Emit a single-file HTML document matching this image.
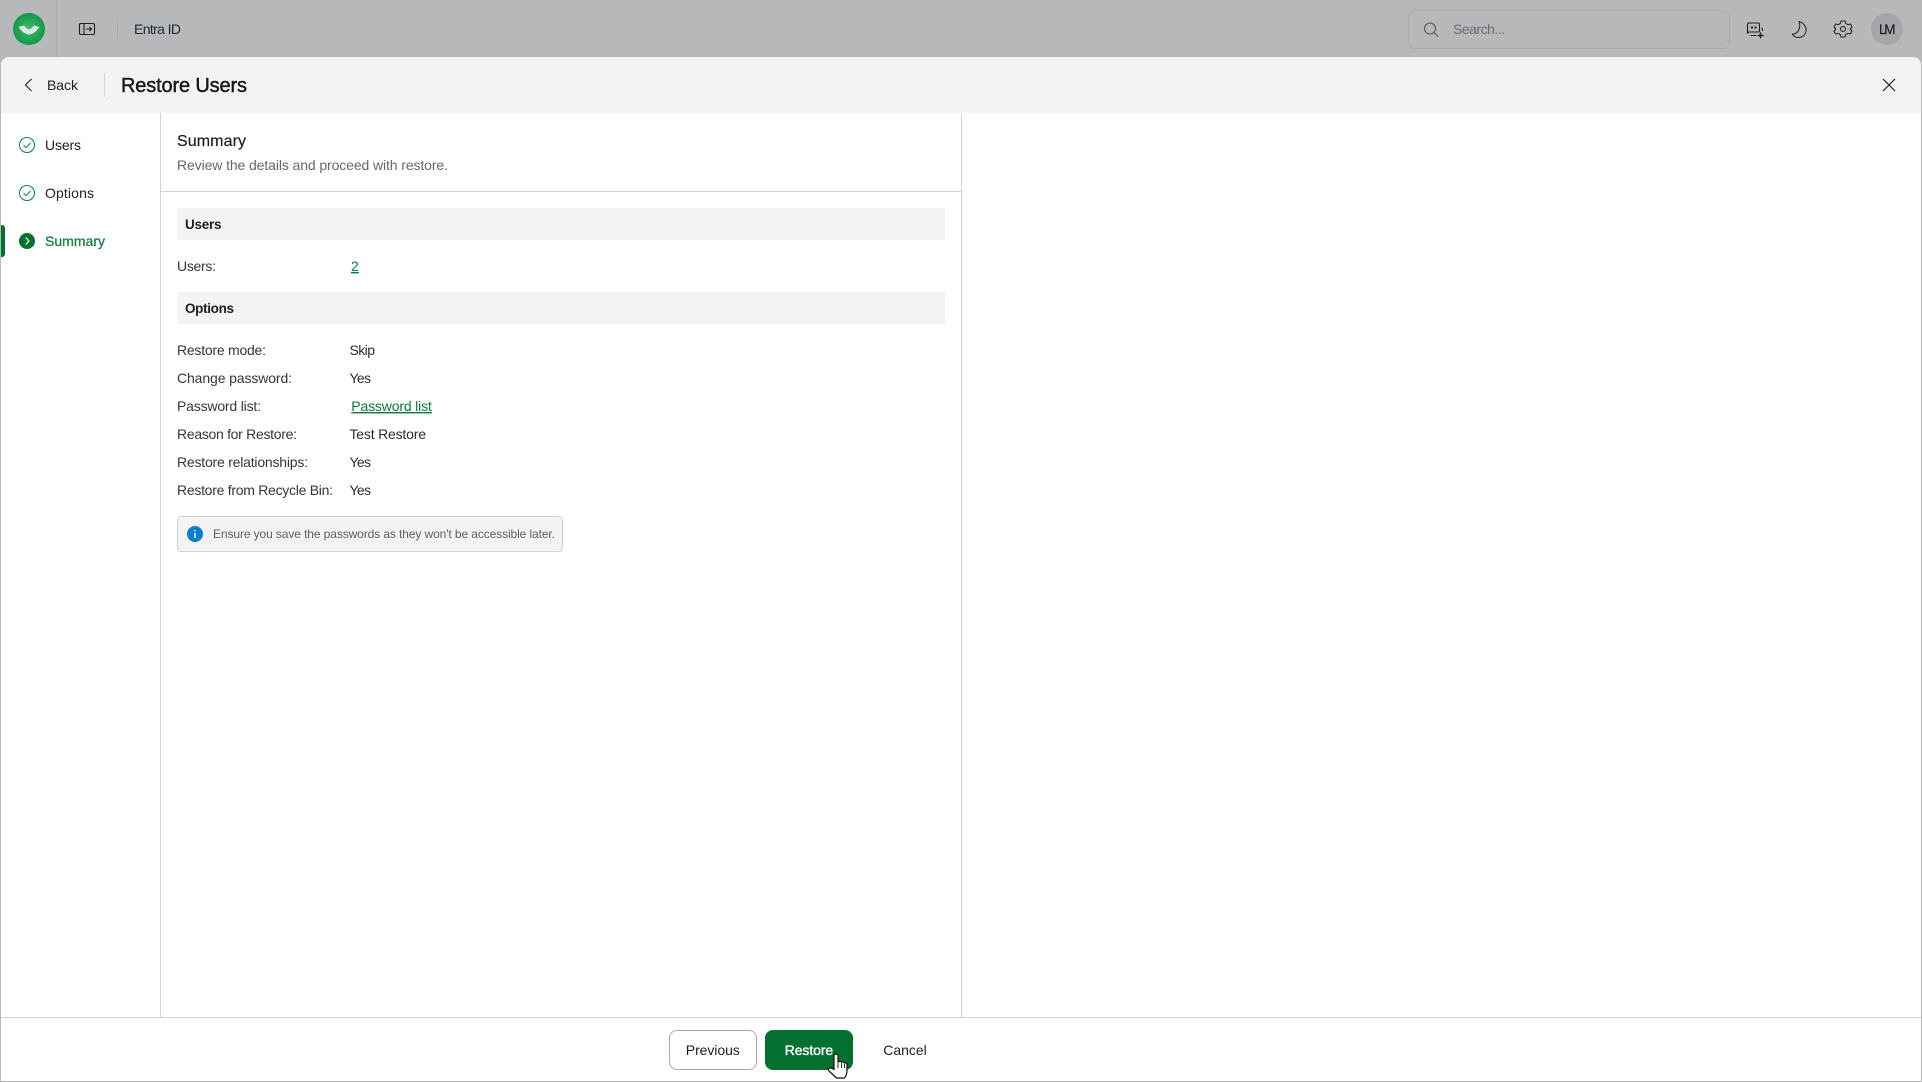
<!DOCTYPE html>
<html lang="en">
<head>
<meta charset="utf-8">
<title>Restore Users</title>
<style>
html,body{margin:0;padding:0;width:1922px;height:1082px;overflow:hidden;background:#b7b8ba}
.abs{position:absolute}
#modal{left:1px;top:57px;width:1920px;height:1024px;background:#fff;border-radius:8px 8px 0 0;overflow:hidden}
#head{left:0;top:0;width:1920px;height:56px;background:#f2f4f3}
svg{position:absolute;left:0;top:0}
text{font-family:"Liberation Sans",sans-serif;font-size:14px;fill:#1c1f22}
</style>
</head>
<body>
<div class="abs" style="left:56px;top:0;width:1px;height:57px;background:#a9aaac"></div>
<div class="abs" style="left:117px;top:19px;width:1px;height:20px;background:#a9aaac"></div>
<div class="abs" style="left:1408px;top:10px;width:320px;height:37px;border:1px solid #a9aaac;border-radius:8px"></div>
<div class="abs" style="left:1871px;top:13px;width:32px;height:32px;border-radius:50%;background:#a5a6a8"></div>
<div id="modal" class="abs">
  <div id="head" class="abs"></div>
  <div class="abs" style="left:103px;top:16px;width:1px;height:24px;background:#d2d4d4"></div>
  <div class="abs" style="left:159px;top:56px;width:1px;height:904px;background:#d2d4d4"></div>
  <div class="abs" style="left:960px;top:56px;width:1px;height:904px;background:#d2d4d4"></div>
  <div class="abs" style="left:160px;top:134px;width:800px;height:1px;background:#d2d4d4"></div>
  <div class="abs" style="left:0;top:960px;width:1920px;height:1px;background:#d2d4d4"></div>
  <div class="abs" style="left:0;top:168px;width:4px;height:32px;background:#04702f;border-radius:0 3px 3px 0"></div>
  <div class="abs" style="left:176px;top:151px;width:768px;height:32px;background:#f2f4f3"></div>
  <div class="abs" style="left:176px;top:235px;width:768px;height:32px;background:#f2f4f3"></div>
  <div class="abs" style="left:176px;top:459px;width:384px;height:34px;background:#f2f4f3;border:1px solid #d2d4d4;border-radius:4px"></div>
  <div class="abs" style="left:668px;top:973px;width:86px;height:38px;border:1px solid #a9acae;border-radius:8px;background:#fff"></div>
  <div class="abs" style="left:764px;top:973px;width:88px;height:40px;background:#04702f;border-radius:8px"></div>
</div>
<svg width="1922" height="1082" viewBox="0 0 1922 1082" xmlns="http://www.w3.org/2000/svg">
  <defs>
    <radialGradient id="g" cx="0.5" cy="0.5" r="0.6">
      <stop offset="0" stop-color="#43b56e"/><stop offset="0.6" stop-color="#1fa352"/><stop offset="1" stop-color="#0c8c42"/>
    </radialGradient>
  </defs>
  <!-- logo -->
  <circle cx="29" cy="29" r="16" fill="url(#g)"/>
  <path d="M18.500 27 L24 25.500 Q27 29 29 29.500 Q31 29 34 25.500 L39.500 27 Q35 34 29 34.500 Q23 34 18.500 27 Z" fill="#d9e8dd"/>
  <!-- sidebar toggle -->
  <g fill="none" stroke="#1c1f22" stroke-width="1.100">
    <rect x="79.500" y="23.500" width="15" height="11" rx="1.500"/>
    <path d="M84 24V34"/>
    <path d="M86 29H91M89.500 27 L91.500 29 L89.500 31"/>
  </g>
  <text x="134" y="34" textLength="47" lengthAdjust="spacing" style="fill:#1d2733">Entra ID</text>
  <!-- search -->
  <g fill="none" stroke="#55585c" stroke-width="1.100">
    <circle cx="1430" cy="28.500" r="5.500"/><path d="M1434 32.500L1438 36.500"/>
  </g>
  <text x="1453" y="34" textLength="52" lengthAdjust="spacing" style="fill:#6a6d72">Search...</text>
  <!-- chat sparkle -->
  <g transform="translate(-1.500,0)">
  <g fill="none" stroke="#1c1f22" stroke-width="1.100">
    <path d="M1749 33 V24.500 Q1749 23 1750.500 23 H1760 Q1761 23 1761 24.500 V31 Q1761 32 1760 32 H1750 Z"/>
    <path d="M1752 35.500 H1758 M1763 28 Q1764 28 1764 29.500 V31"/>
  </g>
  <path d="M1752.500 26.500h2v2h-2zM1756 26.500h2v2h-2z" fill="#1c1f22"/>
  <path d="M1762 31.500 L1763 34.500 L1766 35.500 L1763 36.500 L1762 39 L1761 36.500 L1758.500 35.500 L1761 34.500 Z" fill="#1c1f22"/>
  </g>
  <!-- moon -->
  <path d="M1799 21.500 C1804 23 1806.500 27 1806 31 C1805.500 35 1802 37.800 1798 37.500 C1795.500 37.300 1793.500 36 1792.300 34 C1797.500 34.500 1801.500 28 1799 21.500 Z" fill="none" stroke="#1c1f22" stroke-width="1" stroke-linejoin="round"/>
  <!-- gear -->
  <g fill="none" stroke="#1c1f22" stroke-width="1" stroke-linejoin="round">
    <circle cx="1843" cy="29" r="2.500"/>
    <path d="M1841 21 H1845 L1845.800 23.500 L1848 24.700 L1850.500 24 L1852 27 L1850.200 29 L1852 31 L1850.500 34 L1848 33.300 L1845.800 34.500 L1845 37 H1841 L1840.200 34.500 L1838 33.300 L1835.500 34 L1834 31 L1835.800 29 L1834 27 L1835.500 24 L1838 24.700 L1840.200 23.500 Z"/>
  </g>
  <text x="1879" y="34" textLength="16.500" lengthAdjust="spacing" style="font-size:13.500px;fill:#151b24;stroke:#151b24;stroke-width:.15">LM</text>
  <!-- header -->
  <path d="M31.500 79 L25.500 85 L31.500 91" fill="none" stroke="#2a2d30" stroke-width="1.200"/>
  <text x="47" y="90" textLength="31" lengthAdjust="spacing">Back</text>
  <text x="121" y="92" textLength="126" lengthAdjust="spacing" style="font-size:20px;fill:#16191c;stroke:#16191c;stroke-width:.45">Restore Users</text>
  <path d="M1883 79 L1895 91 M1895 79 L1883 91" fill="none" stroke="#1c1f22" stroke-width="1.200"/>
  <!-- steps -->
  <g fill="none" stroke="#1b8a4a" stroke-width="1.100">
    <circle cx="27" cy="145" r="7.500"/><path d="M23.500 145.300 L26 147.600 L30.500 143"/>
    <circle cx="27" cy="193" r="7.500"/><path d="M23.500 193.300 L26 195.600 L30.500 191"/>
  </g>
  <circle cx="27" cy="241" r="8" fill="#04702f"/>
  <path d="M25.800 237.500 L29 241 L25.800 244.500" fill="none" stroke="#fff" stroke-width="1.200"/>
  <text x="45" y="150" textLength="36" lengthAdjust="spacing">Users</text>
  <text x="45" y="198" textLength="49" lengthAdjust="spacing">Options</text>
  <text x="45" y="246" textLength="60" lengthAdjust="spacing" style="fill:#0b7a3a;stroke:#0b7a3a;stroke-width:.2">Summary</text>
  <!-- content -->
  <text x="177" y="146" textLength="69" lengthAdjust="spacing" style="font-size:16px;stroke:#1c1f22;stroke-width:.2">Summary</text>
  <text x="177" y="170" textLength="271" lengthAdjust="spacing" style="fill:#65696c">Review the details and proceed with restore.</text>
  <text x="185" y="229" textLength="36.500" lengthAdjust="spacing" style="font-weight:bold;font-size:13.500px">Users</text>
  <text x="177" y="271" textLength="39" lengthAdjust="spacing" style="fill:#33363a">Users:</text>
  <text x="351" y="271" textLength="7" lengthAdjust="spacing" text-decoration="underline" style="fill:#0b7a3a">2</text>
  <text x="185" y="313" textLength="49" lengthAdjust="spacing" style="font-weight:bold;font-size:13.500px">Options</text>
  <g style="fill:#33363a">
    <text x="177" y="355" textLength="89" lengthAdjust="spacing" style="fill:#33363a">Restore mode:</text>
    <text x="177" y="383" textLength="115" lengthAdjust="spacing" style="fill:#33363a">Change password:</text>
    <text x="177" y="411" textLength="84" lengthAdjust="spacing" style="fill:#33363a">Password list:</text>
    <text x="177" y="439" textLength="120" lengthAdjust="spacing" style="fill:#33363a">Reason for Restore:</text>
    <text x="177" y="467" textLength="131" lengthAdjust="spacing" style="fill:#33363a">Restore relationships:</text>
    <text x="177" y="495" textLength="156" lengthAdjust="spacing" style="fill:#33363a">Restore from Recycle Bin:</text>
  </g>
  <text x="349.500" y="355" textLength="25.500" lengthAdjust="spacing" style="fill:#2a2d30">Skip</text>
  <text x="349.500" y="383" textLength="21.500" lengthAdjust="spacing" style="fill:#2a2d30">Yes</text>
  <text x="351.300" y="411" textLength="80.500" lengthAdjust="spacing" text-decoration="underline" style="fill:#0b7a3a">Password list</text>
  <text x="349.500" y="439" textLength="76.500" lengthAdjust="spacing" style="fill:#2a2d30">Test Restore</text>
  <text x="349.500" y="467" textLength="21.500" lengthAdjust="spacing" style="fill:#2a2d30">Yes</text>
  <text x="349.500" y="495" textLength="21.500" lengthAdjust="spacing" style="fill:#2a2d30">Yes</text>
  <!-- info -->
  <circle cx="195" cy="534" r="8" fill="#0a7fd0"/>
  <rect x="194.300" y="533" width="1.400" height="5" fill="#fff"/>
  <rect x="194.300" y="530" width="1.400" height="1.500" fill="#fff"/>
  <text x="213" y="538" textLength="342" lengthAdjust="spacing" style="font-size:12px;fill:#5c6064">Ensure you save the passwords as they won't be accessible later.</text>
  <!-- footer -->
  <text x="685.800" y="1055" textLength="54" lengthAdjust="spacing">Previous</text>
  <text x="784.700" y="1055" textLength="48.500" lengthAdjust="spacing" style="fill:#fff;stroke:#fff;stroke-width:.35">Restore</text>
  <text x="883.300" y="1055" textLength="43.500" lengthAdjust="spacing">Cancel</text>
  <!-- cursor -->
  <g transform="translate(-2,-1)">
  <path d="M836 1057 Q836 1055 838 1055 Q840 1055 840 1057 V1063 Q842 1062 843.500 1063 Q845.500 1062.500 846.500 1064 Q848.500 1063.500 849 1065.500 V1071 Q849 1076 846.500 1079 H838.500 L831 1072 Q829.500 1070 831.500 1069 Q833.500 1068.500 836 1070.500 Z" fill="#fff" stroke="#111" stroke-width="1.200" stroke-linejoin="round"/>
  <path d="M840 1064V1069M843.500 1064V1069M846.500 1065V1069" stroke="#111" stroke-width=".9" fill="none"/>
  </g>
</svg>
</body>
</html>
